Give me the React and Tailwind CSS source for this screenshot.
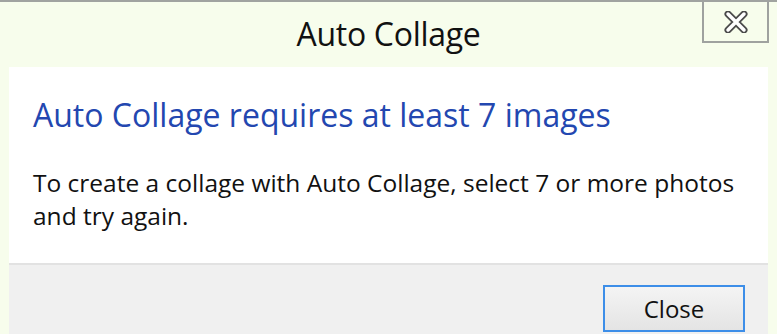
import React from 'react';

const CloseGlyph = () => (
  <svg width="24" height="22" viewBox="0 0 24 22" fill="none">
    <path d="M4 3 L20 19 M20 3 L4 19" stroke="#4a4a4a" strokeWidth="7" strokeLinecap="round" />
    <path d="M4 3 L20 19 M20 3 L4 19" stroke="#ffffff" strokeWidth="3.5" strokeLinecap="round" />
  </svg>
);

export default function App() {
  return (
    <div
      className="w-[777px] h-[334px] flex flex-col bg-[#f7fdec] border-t-2 border-[#a0a3a0] overflow-hidden"
      style={{ fontFamily: '"Open Sans", "Noto Sans", sans-serif' }}
    >
      {/* Title bar */}
      <div className="h-[65px] grid grid-cols-[1fr_auto_1fr] items-start">
        <div />
        <div className="pt-[12px] text-[32px] leading-[40px] text-[#111] tracking-[-0.3px]">Auto Collage</div>
        <div className="flex justify-end pr-[8px]">
          <button className="w-[67px] h-[41px] flex items-center justify-center border-2 border-t-0 border-[#9fa29f] bg-[#f7fdec]">
            <CloseGlyph />
          </button>
        </div>
      </div>

      {/* Dialog body */}
      <div className="flex-1 flex flex-col mx-[9px] bg-white">
        <div className="h-[196px] pl-[24px] pt-[27px]">
          <h1 className="text-[32px] leading-[42px] text-[#2347b0]">
            Auto Collage requires at least 7 images
          </h1>
          <p className="mt-[30px] text-[24.5px] leading-[33px] text-[#111]">
            To create a collage with Auto Collage, select 7 or more photos
            <br />
            and try again.
          </p>
        </div>
        <div className="flex-1 flex justify-end items-start bg-[#f0f0f0] border-t-2 border-[#e2e2e2] pr-[23px] pt-[20px]">
          <button className="w-[142px] h-[47px] border-2 border-[#3d8ee8] bg-gradient-to-b from-[#f4f4f4] to-[#e4e4e4] text-[24px] text-[#111] leading-none">
            Close
          </button>
        </div>
      </div>
    </div>
  );
}
